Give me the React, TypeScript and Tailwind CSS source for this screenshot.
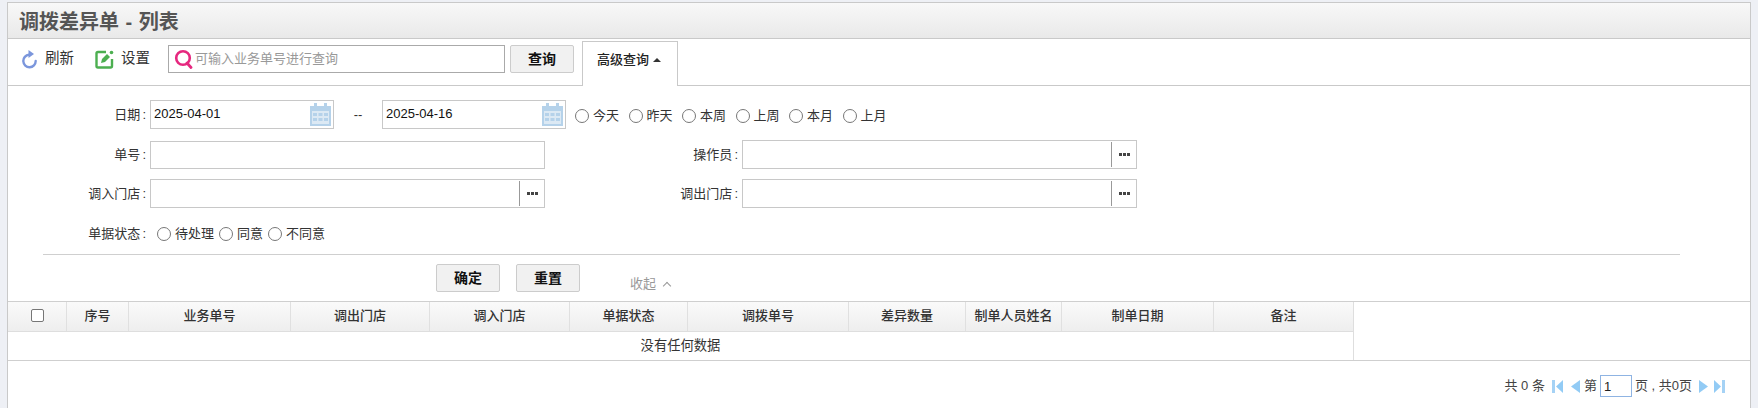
const font = { fontFamily: '"Liberation Sans", "Noto Sans CJK SC", sans-serif' }

const columns = [
  { title: '', width: 'w-[59px]' },
  { title: '序号', width: 'w-[62px]' },
  { title: '业务单号', width: 'w-[162px]' },
  { title: '调出门店', width: 'w-[139px]' },
  { title: '调入门店', width: 'w-[140px]' },
  { title: '单据状态', width: 'w-[118px]' },
  { title: '调拨单号', width: 'w-[161px]' },
  { title: '差异数量', width: 'w-[117px]' },
  { title: '制单人员姓名', width: 'w-[96px]' },
  { title: '制单日期', width: 'w-[152px]' },
  { title: '备注', width: 'w-[139px]' },
]

function RefreshIcon() {
  return (
    <svg width="16" height="20" viewBox="0 0 16 20" fill="none">
      <path d="M7 5.800A6.200 6.200 0 1 0 13.700 12" stroke="#7b96dc" strokeWidth="2.400" strokeLinecap="round" />
      <path d="M6.500 1L12 5 6.500 9z" fill="#7b96dc" />
    </svg>
  )
}

function EditIcon() {
  return (
    <svg width="19" height="19" viewBox="0 0 19 19" fill="none">
      <path d="M11 2H3a1.500 1.500 0 0 0-1.500 1.500v12.500A1.500 1.500 0 0 0 3 17.500h12.500A1.500 1.500 0 0 0 17 16V9" stroke="#4caf50" strokeWidth="2.400" />
      <path d="M6 13l1-4 5-5 3 3-5 5z" fill="#4caf50" />
      <circle cx="16.500" cy="2.500" r="1.800" fill="#4caf50" />
    </svg>
  )
}

function SearchIcon() {
  return (
    <svg width="19" height="20" viewBox="0 0 19 20" fill="none">
      <circle cx="9" cy="9" r="6.800" stroke="#e6287f" strokeWidth="2.600" />
      <path d="M13 14l4 4.500" stroke="#e6287f" strokeWidth="2.800" strokeLinecap="round" />
    </svg>
  )
}

function CalendarIcon() {
  return (
    <svg width="21" height="23" viewBox="0 0 21 23" className="shrink-0">
      <path d="M0 3h4V0h3v3h7V0h3v3h4v20H0z" fill="#b5d2ea" />
      <rect x="2" y="8" width="17" height="13" fill="#dce9f4" />
      <path d="M3 10h4v3H3zM8.500 10h4v3h-4zM14 10h4v3h-4zM3 15h4v3H3zM8.500 15h4v3h-4zM14 15h4v3h-4z" fill="#b5d2ea" />
    </svg>
  )
}

function SkipIcon({ flip = false, bar = false }: { flip?: boolean; bar?: boolean }) {
  return (
    <svg width={bar ? 11 : 9} height="13" viewBox={bar ? '0 0 11 13' : '0 0 9 13'} className={flip ? 'rotate-180' : ''}>
      {bar && <rect x="0" y="0" width="3" height="13" fill="#a5d2f5" />}
      <path d={bar ? 'M11 0v13L4 6.500z' : 'M9 0v13L0 6.500z'} fill="#92cbf5" />
    </svg>
  )
}

function Radio({ label }: { label: string }) {
  return (
    <label className="flex items-center gap-[4px] text-[13px] text-[#333]">
      <input type="radio" name={label} className="h-[14px] w-[14px] appearance-none rounded-full border border-[#777] bg-white" />
      {label}
    </label>
  )
}

function FieldLabel({ children, className }: { children: string; className: string }) {
  return (
    <span className={`shrink-0 pr-[4px] text-right text-[13px] text-[#333] ${className}`}>
      {children}
      <span className="ml-[2px]">:</span>
    </span>
  )
}

function DateInput({ value }: { value: string }) {
  return (
    <div className="flex h-[29px] w-[184px] items-center justify-between border border-[#c8c8c8] pl-[3px] pr-[2px] text-[13px] text-[#111]">
      <span className="-translate-y-px">{value}</span>
      <CalendarIcon />
    </div>
  )
}

function PickerInput({ className }: { className: string }) {
  return (
    <div className={`flex h-[29px] items-center justify-end border border-[#c8c8c8] ${className}`}>
      <div className="my-[2px] flex h-[25px] w-[25px] items-center justify-center gap-[1px] border-l border-[#999]">
        <span className="h-[3px] w-[3px] bg-[#444]" />
        <span className="h-[3px] w-[3px] bg-[#444]" />
        <span className="h-[3px] w-[3px] bg-[#444]" />
      </div>
    </div>
  )
}

function GrayButton({ children, className }: { children: string; className: string }) {
  return (
    <button className={`rounded-[2px] border border-[#ccc] bg-[#f1f1f1] text-[14px] font-bold text-[#111] ${className}`}>
      {children}
    </button>
  )
}

export default function App() {
  return (
    <div className="h-[408px] w-[1758px] overflow-hidden bg-[#eef0f5] px-[7px] pt-[2px]" style={font}>
      <div className="h-[406px] border-x border-t border-[#c9c9c9] bg-white">
        <div className="flex h-[36px] items-center border-b border-[#c9c9c9] bg-gradient-to-b from-[#f8f8f8] to-[#e9e9e9] pl-[11px] pt-[2px] text-[20px] font-bold text-[#555] [word-spacing:1px]">
          调拨差异单 - 列表
        </div>

        <div className="flex h-[47px] items-end border-b border-[#c9c9c9]">
          <div className="flex h-[46px] items-center self-start pb-[6px] pl-[14px]">
            <RefreshIcon />
            <span className="ml-[7px] text-[14.500px] text-[#333]">刷新</span>
            <span className="ml-[21px]"><EditIcon /></span>
            <span className="ml-[7px] text-[14.500px] text-[#333]">设置</span>
            <div className="ml-[18px] flex h-[28px] w-[337px] items-center border border-[#aaa] pl-[5px] text-[13px] text-[#999]">
              <SearchIcon />
              <span className="ml-[2px]">可输入业务单号进行查询</span>
            </div>
            <GrayButton className="ml-[5px] h-[28px] w-[64px]">查询</GrayButton>
          </div>
          <div className="relative top-px ml-[8px] flex h-[45px] w-[96px] items-center gap-[4px] border-x border-t border-[#c9c9c9] bg-white pb-[9px] pl-[14px] text-[13px] font-medium text-[#222]">
            高级查询
            <span className="h-0 w-0 border-x-[4px] border-b-[4px] border-x-transparent border-b-[#333]" />
          </div>
        </div>

        <div className="flex flex-col pt-[14px]">
          <div className="flex h-[29px] items-center">
            <FieldLabel className="w-[142px]">日期</FieldLabel>
            <DateInput value="2025-04-01" />
            <span className="w-[48px] text-center text-[13px] text-[#333]">--</span>
            <DateInput value="2025-04-16" />
            <div className="ml-[9px] mt-[2px] flex items-center gap-[9.500px]">
              {['今天', '昨天', '本周', '上周', '本月', '上月'].map(item => (
                <Radio key={item} label={item} />
              ))}
            </div>
          </div>

          <div className="mt-[11px] flex h-[29px] items-center">
            <FieldLabel className="w-[142px]">单号</FieldLabel>
            <div className="h-[28px] w-[395px] border border-[#c8c8c8]" />
            <FieldLabel className="w-[197px]">操作员</FieldLabel>
            <PickerInput className="w-[395px]" />
          </div>

          <div className="mt-[10px] flex h-[29px] items-center">
            <FieldLabel className="w-[142px]">调入门店</FieldLabel>
            <PickerInput className="w-[395px]" />
            <FieldLabel className="w-[197px]">调出门店</FieldLabel>
            <PickerInput className="w-[395px]" />
          </div>

          <div className="mt-[12px] flex h-[27px] items-center">
            <span className="-translate-y-px"><FieldLabel className="inline-block w-[142px]">单据状态</FieldLabel></span>
            <div className="ml-[7px] flex items-center gap-[5px]">
              {['待处理', '同意', '不同意'].map(item => (
                <Radio key={item} label={item} />
              ))}
            </div>
          </div>

          <div className="ml-[35px] mr-[70px] mt-[7px] border-t border-[#cfcfcf]" />

          <div className="mt-[9px] flex h-[29px] items-start pl-[428px]">
            <GrayButton className="h-[28px] w-[64px]">确定</GrayButton>
            <GrayButton className="ml-[16px] h-[28px] w-[64px]">重置</GrayButton>
            <span className="ml-[50px] mt-[10px] flex items-center gap-[8px] text-[13px] text-[#999]">
              收起
              <span className="mt-[2px] h-[6px] w-[6px] translate-y-[1px] rotate-45 border-l border-t border-[#999]" />
            </span>
          </div>
        </div>

        <div className="mt-[8px] border-y border-[#cfcfcf]">
          <div className="w-[1346px] border-r border-[#dedede]">
            <div className="flex h-[30px] border-b border-[#dedede] bg-gradient-to-b from-[#fafafa] to-[#eeeeee]">
              {columns.map((column, i) => (
                <div
                  key={i}
                  className={`flex shrink-0 items-center justify-center border-r border-[#e0e0e0] pb-[2px] text-[13px] font-medium text-[#333] last:border-r-0 ${column.width}`}
                >
                  {i === 0 ? (
                    <input type="checkbox" className="h-[13px] w-[13px] appearance-none rounded-[2px] border border-[#767676] bg-white" />
                  ) : (
                    column.title
                  )}
                </div>
              ))}
            </div>
            <div className="flex h-[28px] items-center justify-center text-[13.300px] text-[#333]">没有任何数据</div>
          </div>
        </div>

        <div className="flex items-center justify-end pr-[25px] pt-[14px] text-[13px] text-[#444]">
          <span className="mr-[7px]">共 0 条</span>
          <SkipIcon bar />
          <span className="ml-[8px]"><SkipIcon /></span>
          <span className="ml-[4px]">第</span>
          <input readOnly value="1" className="ml-[3px] h-[22px] w-[32px] border border-[#8fb4e3] pl-[3px] text-[13px] text-[#222] outline-none" />
          <span className="ml-[3px]">页 , 共0页</span>
          <span className="ml-[7px]"><SkipIcon flip /></span>
          <span className="ml-[6px]"><SkipIcon flip bar /></span>
        </div>
      </div>
    </div>
  )
}
